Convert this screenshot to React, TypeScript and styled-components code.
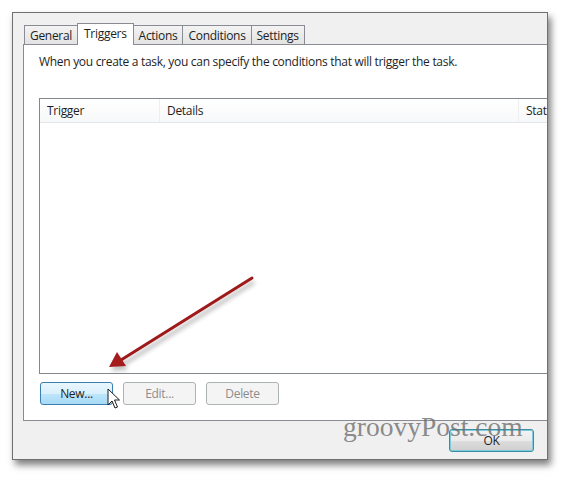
import React from 'react';
import styled, { createGlobalStyle } from 'styled-components';

const GlobalStyle = createGlobalStyle`
    body {
        margin: 0;
        background: #ffffff;
        font-family: 'Open Sans', 'Noto Sans', sans-serif;
        font-size: 12px;
        letter-spacing: -0.3px;
        color: #1e1e1e;
    }
`;

type Tab = { label: string; selected?: boolean };

const tabs: Tab[] = [
    { label: 'General' },
    { label: 'Triggers', selected: true },
    { label: 'Actions' },
    { label: 'Conditions' },
    { label: 'Settings' },
];

const columns = [
    { label: 'Trigger', width: 120 },
    { label: 'Details', width: 359 },
    { label: 'Status', width: 120 },
];

const App: React.FC = () => {
    return (
        <Page>
            <GlobalStyle />
            <Window>
                <TabStrip>
                    {tabs.map(tab => (
                        <TabButton key={tab.label} selected={tab.selected}>
                            {tab.label}
                        </TabButton>
                    ))}
                </TabStrip>
                <Panel>
                    <Intro>When you create a task, you can specify the conditions that will trigger the task.</Intro>
                    <ListView>
                        <HeaderRow>
                            {columns.map(col => (
                                <HeaderCell key={col.label} width={col.width}>
                                    {col.label}
                                </HeaderCell>
                            ))}
                        </HeaderRow>
                    </ListView>
                    <ButtonRow>
                        <PushButton hot>New...</PushButton>
                        <PushButton disabled>Edit...</PushButton>
                        <PushButton disabled>Delete</PushButton>
                    </ButtonRow>
                </Panel>
                <Footer>
                    <OkButton>OK</OkButton>
                </Footer>
            </Window>
            <Watermark>groovyPost.com</Watermark>
            <Annotation width="567" height="482" viewBox="0 0 567 482">
                <defs>
                    <filter id="blur" x="-20%" y="-20%" width="140%" height="140%">
                        <feGaussianBlur stdDeviation="2" />
                    </filter>
                </defs>
                <g opacity="0.35" filter="url(#blur)" transform="translate(2 4)">
                    <line x1="252" y1="278" x2="120" y2="361" stroke="#555" strokeWidth="4" />
                    <path d="M109 367 L117 352 L126 366 Z" fill="#555" />
                </g>
                <line x1="252" y1="278" x2="121" y2="360" stroke="#9e1a1a" strokeWidth="3" strokeLinecap="round" />
                <path d="M109 367 L117 352 L126 366 Z" fill="#a51c1c" />
            </Annotation>
            <Cursor width="14" height="22" viewBox="0 0 14 22">
                <path
                    d="M1 1 L1 17 L5 13 L8 20 L10.5 19 L7.5 12 L12.5 12 Z"
                    fill="#ffffff"
                    stroke="#1a1a1a"
                    strokeWidth="1"
                    strokeLinejoin="round"
                />
            </Cursor>
        </Page>
    );
};

const Page = styled.div`
    position: relative;
    width: 567px;
    height: 482px;
    padding: 12px 0 0 12px;
    box-sizing: border-box;
    overflow: hidden;
`;

const Window = styled.div`
    width: 536px;
    height: 448px;
    box-sizing: border-box;
    border: 1px solid #707070;
    background: #f0f0f0;
    box-shadow: 3px 5px 7px rgba(0, 0, 0, 0.5);
    overflow: hidden;
    display: flex;
    flex-direction: column;
`;

const TabStrip = styled.div`
    display: flex;
    align-items: flex-end;
    height: 31px;
    padding-left: 12px;
    position: relative;
    z-index: 1;
`;

const TabButton = styled.div<{ selected?: boolean }>`
    box-sizing: border-box;
    height: ${p => (p.selected ? 22 : 19)}px;
    margin-bottom: ${p => (p.selected ? -1 : 0)}px;
    padding: ${p => (p.selected ? '1px 6px 0' : '0 5px')};
    margin-left: -1px;
    border: 1px solid #898c95;
    border-bottom: none;
    background: ${p => (p.selected ? '#ffffff' : 'linear-gradient(#f3f3f3, #e3e3e3)')};
    display: flex;
    align-items: ${p => (p.selected ? 'flex-start' : 'center')};
    line-height: 17px;
    white-space: nowrap;
`;

const Panel = styled.div`
    flex-shrink: 0;
    width: 600px;
    height: 377px;
    margin-left: 10px;
    box-sizing: border-box;
    border: 1px solid #898c95;
    background: #ffffff;
    display: flex;
    flex-direction: column;
    padding: 9px 0 0 15px;
`;

const Intro = styled.div`
    line-height: 16px;
    white-space: nowrap;
`;

const ListView = styled.div`
    margin-top: 28px;
    height: 276px;
    box-sizing: border-box;
    border: 1px solid #828790;
    border-right: none;
    background: #ffffff;
`;

const HeaderRow = styled.div`
    display: flex;
    height: 23px;
    border-bottom: 1px solid #e3e5e8;
    background: linear-gradient(#ffffff, #f7f8f9);
`;

const HeaderCell = styled.div<{ width: number }>`
    width: ${p => p.width}px;
    flex-shrink: 0;
    box-sizing: border-box;
    padding-left: 7px;
    border-right: 1px solid #eeeeee;
    display: flex;
    align-items: center;
`;

const ButtonRow = styled.div`
    display: flex;
    gap: 10px;
    margin-top: 8px;
    padding-left: 1px;
`;

const PushButton = styled.div<{ hot?: boolean; disabled?: boolean }>`
    width: 73px;
    height: 23px;
    box-sizing: border-box;
    border-radius: 3px;
    border: 1px solid ${p => (p.hot ? '#3c7fb1' : '#adb2b5')};
    background: ${p => (p.hot ? 'linear-gradient(#eaf6fd 0%, #d9f0fc 50%, #bee6fd 51%, #a7d9f5 100%)' : '#f4f4f4')};
    color: ${p => (p.disabled ? '#8d8d8d' : '#1e1e1e')};
    display: flex;
    align-items: center;
    justify-content: center;
`;

const Footer = styled.div`
    display: flex;
    justify-content: flex-end;
    width: 534px;
    padding: 8px 13px 0 0;
    box-sizing: border-box;
`;

const OkButton = styled.div`
    width: 85px;
    height: 23px;
    box-sizing: border-box;
    border-radius: 3px;
    border: 1px solid #3a8ea3;
    box-shadow: inset 0 0 0 1px #7fcbdc;
    background: linear-gradient(#f2f2f2 0%, #ebebeb 50%, #dddddd 51%, #cfcfcf 100%);
    display: flex;
    align-items: center;
    justify-content: center;
`;

const Watermark = styled.div`
    position: absolute;
    left: 343px;
    top: 411px;
    font-family: 'Liberation Serif', serif;
    font-size: 27.5px;
    letter-spacing: 0;
    color: rgba(110, 110, 110, 0.8);
    white-space: nowrap;
`;

const Annotation = styled.svg`
    position: absolute;
    left: 0;
    top: 0;
    pointer-events: none;
`;

const Cursor = styled.svg`
    position: absolute;
    left: 107px;
    top: 388px;
`;

export default App;
